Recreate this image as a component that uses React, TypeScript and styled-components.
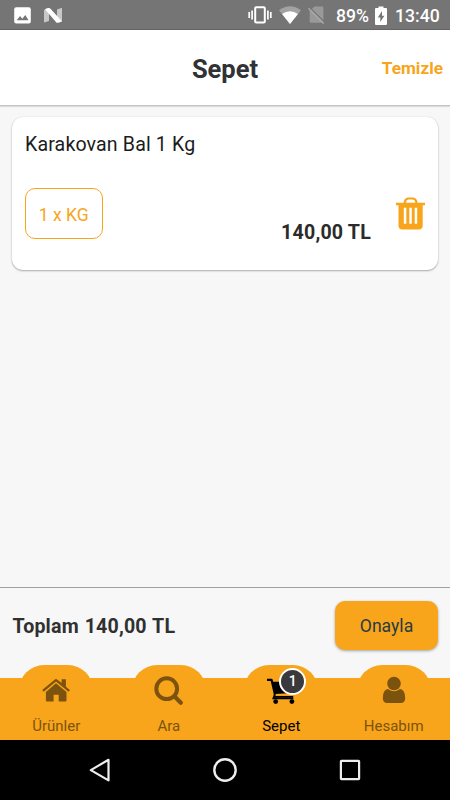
import React from "react";
import styled, { createGlobalStyle } from "styled-components";

const ORANGE = "#f8a51b";

const GlobalStyle = createGlobalStyle`
  * { box-sizing: border-box; }
  body { margin: 0; background: #f7f7f7; font-family: Roboto, "Noto Sans", sans-serif; }
  svg { display: block; flex: none; }
`;

const Screen = styled.div`
  width: 450px;
  height: 800px;
  display: flex;
  flex-direction: column;
  background: #f7f7f7;
  overflow: hidden;
`;

const StatusBar = styled.div`
  height: 30px;
  flex: none;
  display: flex;
  align-items: center;
  justify-content: space-between;
  padding: 1px 11px 0 14px;
  background: #757575;
  border-bottom: 1px solid #686466;
  color: #fff;
`;

const StatusGroup = styled.div<{ $gap: number }>`
  display: flex;
  align-items: center;
  gap: ${(p) => p.$gap}px;
`;

const StatusText = styled.span<{ $width: number; $ml?: number }>`
  width: ${(p) => p.$width}px;
  margin-left: ${(p) => p.$ml ?? 0}px;
  font-size: 17.6px;
  font-weight: 500;
  line-height: 22px;
  white-space: nowrap;
  padding-top: 2px;
`;

const Header = styled.header`
  height: 76px;
  flex: none;
  display: grid;
  grid-template-columns: 1fr auto 1fr;
  align-items: center;
  padding: 1px 7px 0;
  background: #fff;
  border-bottom: 1px solid #c4c4c4;
  box-shadow: 0 1px 1px rgba(0, 0, 0, 0.1);
`;

const Title = styled.h1`
  grid-column: 2;
  margin: 0;
  padding-top: 1px;
  font-size: 25.5px;
  line-height: 30px;
  font-weight: 700;
  color: #303234;
`;

const ClearButton = styled.button`
  justify-self: end;
  border: 0;
  padding: 0;
  background: none;
  font: 700 17.2px/20px Roboto, sans-serif;
  color: ${ORANGE};
`;

const Content = styled.main`
  flex: 1;
  padding: 11px 12px 0;
`;

const Card = styled.section`
  height: 153px;
  display: flex;
  flex-direction: column;
  padding: 14px 13px 0 13px;
  background: #fff;
  border-radius: 11px;
  box-shadow: 0 1px 2px rgba(0, 0, 0, 0.3), 0 0 1px rgba(0, 0, 0, 0.15);
`;

const ProductName = styled.div`
  font-size: 19.6px;
  line-height: 27px;
  letter-spacing: 0.13px;
  color: #1c1c1c;
`;

const CardRow = styled.div`
  display: flex;
  align-items: flex-start;
  margin-top: 30px;
`;

const Quantity = styled.div`
  width: 77.5px;
  height: 51px;
  display: flex;
  align-items: center;
  justify-content: center;
  padding-top: 2px;
  border: 1.4px solid ${ORANGE};
  border-radius: 10px;
  font-size: 17.5px;
  color: ${ORANGE};
`;

const Price = styled.div`
  margin: 32px 25px 0 auto;
  font-size: 19.6px;
  line-height: 25px;
  font-weight: 700;
  letter-spacing: 0.2px;
  color: #2b2b2b;
`;

const TrashButton = styled.button`
  border: 0;
  padding: 0;
  margin-top: 9px;
  background: none;
`;

const Summary = styled.section`
  height: 78px;
  flex: none;
  display: flex;
  justify-content: space-between;
  align-items: center;
  padding: 0 12px 0 12.5px;
  border-top: 1px solid #a0a0a0;
`;

const Total = styled.div`
  font-size: 19.6px;
  line-height: 24px;
  font-weight: 700;
  letter-spacing: 0.18px;
  word-spacing: 0.8px;
  color: #303030;
`;

const ConfirmButton = styled.button`
  width: 103px;
  height: 49px;
  margin-bottom: 3px;
  padding: 2px 0 0;
  border: 0;
  border-radius: 10px;
  background: ${ORANGE};
  box-shadow: 0 1px 3px rgba(0, 0, 0, 0.35);
  font: 400 17.6px/22px Roboto, sans-serif;
  color: #263c44;
`;

const TabBar = styled.nav`
  height: 75px;
  flex: none;
  display: grid;
  grid-template-columns: repeat(4, 1fr);
  background: linear-gradient(transparent 12.5px, ${ORANGE} 12.5px);
`;

const Tab = styled.div<{ $active?: boolean }>`
  display: flex;
  flex-direction: column;
  align-items: center;
  color: ${(p) => (p.$active ? "#000" : "#7c530e")};
`;

const TabBump = styled.div`
  position: relative;
  width: 74px;
  height: 50px;
  display: flex;
  justify-content: center;
  background: ${ORANGE};
  border-radius: 25px 25px 0 0;
`;

const TabLabel = styled.span`
  font-size: 15px;
  line-height: 22px;
`;

const Badge = styled.span`
  position: absolute;
  left: 35px;
  top: 2.5px;
  width: 27px;
  height: 27px;
  display: flex;
  align-items: center;
  justify-content: center;
  border: 2.5px solid #fff;
  border-radius: 50%;
  background: #3a3a3c;
  color: #fff;
  font-size: 14px;
  font-weight: 500;
`;

const SystemNav = styled.div`
  height: 60px;
  flex: none;
  display: grid;
  grid-template-columns: repeat(3, 125px);
  justify-content: center;
  justify-items: center;
  align-items: center;
  background: #000;
`;

const ImageIcon = () => (
  <svg width="17" height="17" viewBox="0 0 17 17">
    <rect x="0.2" y="0.2" width="16.6" height="16.4" rx="2" fill="#fff" />
    <path d="M2.7 13.2 6 9l2.3 2.7L11.3 8l3.2 5.2Z" fill="#757575" />
  </svg>
);

const NougatIcon = () => (
  <svg width="19" height="17" viewBox="0 0 19 17">
    <path d="M0 3 5 1v13L0 15.600ZM13 2.500 18 .8v13.800L13 15.500Z" fill="#c8c8c8" />
    <path d="M1 2.200Q4.500.3 6 1.300L17.900 14.200Q14.500 16.200 12.600 15.800Z" fill="#fff" />
  </svg>
);

const VibrateIcon = () => (
  <svg width="24" height="18" viewBox="0 0 24 18" fill="none" stroke="#fff">
    <rect x="7.2" y="1.2" width="9.6" height="15.4" rx="1" strokeWidth="2" />
    <path d="M1.2 6v6M4.1 4.5v9M19.9 4.5v9M22.8 6v6" strokeWidth="1.7" />
  </svg>
);

const WifiIcon = () => (
  <svg width="22" height="18" viewBox="0 0 22 18">
    <path d="M11 18 0 4.2Q11-3.8 22 4.2Z" fill="#a2a2a2" />
    <path d="M11 18 3 8Q11 2.3 19 8Z" fill="#fff" />
  </svg>
);

const NoSimIcon = () => (
  <svg width="17" height="18" viewBox="0 0 17 18">
    <path d="M6.3.6H14q1.4 0 1.4 1.4v14.8H3q-1.3 0-1.3-1.3V5.3Z" fill="#999" />
    <path d="m1.500 1.500 15 15" stroke="#757575" strokeWidth="1.600" />
    <path d="m.5 2.3 15.2 15.2" stroke="#aaa" strokeWidth="1.500" />
  </svg>
);

const BatteryIcon = () => (
  <svg width="12" height="19" viewBox="0 0 12 19">
    <path d="M3.5 2V.5h5V2H11q1 0 1 1v15q0 1-1 1H1q-1 0-1-1V3q0-1 1-1Z" fill="#fff" />
    <path d="M7 5 2.8 11.5h2.5V16L9.4 9.7H7Z" fill="#757575" />
  </svg>
);

const TrashIcon = () => (
  <svg width="29" height="33" viewBox="0 0 29 33" fill={ORANGE}>
    <path d="M8.8 6.5V5.2q.6-3.700 3.6-3.700h4.3q3.1 0 3.7 3.700v1.3" fill="none" stroke={ORANGE} strokeWidth="2.2" />
    <path
      fillRule="evenodd"
      d="M0 5.8h29v2.4h-2.3v20.3q0 4-4 4H6.5q-4 0-4-4V8.200H0ZM7.800 10.800v16h2.500v-16Zm5.500 0v16h2.500v-16Zm5.400 0v16h2.500v-16Z"
    />
  </svg>
);

const HomeIcon = () => (
  <svg width="28" height="38" viewBox="0 0 28 38" fill="currentColor">
    <path d="M14 18.300 24.500 27v8.500q0 1-1 1h-6.800v-6.700h-5.100v6.700H4.900q-1 0-1-1V27Z" />
    <path d="M.2 25 12.900 14.400q1.100-.9 2.200 0l4.500 3.700V14.300h4.300v7.400L28 25l-1.500 1.800L14 16.500 1.700 26.800Z" />
  </svg>
);

const SearchIcon = () => (
  <svg width="32" height="42" viewBox="0 0 32 42" fill="none" stroke="currentColor">
    <circle cx="13.700" cy="23.700" r="10.400" strokeWidth="4" />
    <path d="m21.300 31.300 6.500 6.400" strokeWidth="4.300" strokeLinecap="round" />
  </svg>
);

const CartIcon = () => (
  <svg width="30" height="40" viewBox="0 0 30 40">
    <path
      d="M1 14.900h4.600l3.800 16.600h17.800"
      fill="none"
      stroke="currentColor"
      strokeWidth="2.200"
      strokeLinejoin="round"
    />
    <path d="M6.300 16.700h21v11.300L8.900 29Z" fill="currentColor" />
    <path d="M9 30.300h18.300" stroke={ORANGE} strokeWidth="1.300" />
    <path d="M8.800 29.800 7.500 33.200h19.800" fill="none" stroke="currentColor" strokeWidth="2" />
    <circle cx="9.700" cy="36.600" r="2.400" fill="currentColor" />
    <circle cx="25.900" cy="36.600" r="2.400" fill="currentColor" />
  </svg>
);

const UserIcon = () => (
  <svg width="24" height="40" viewBox="0 0 24 40" fill="currentColor">
    <circle cx="12" cy="18.500" r="6.800" />
    <path d="M6 24q6 4.500 12 0 5.200.8 5.200 9 0 5.100-4.500 5.100H5.300q-4.500 0-4.500-5.100 0-8.200 5.200-9Z" />
  </svg>
);

const tabs = [
  { label: "Ürünler", icon: <HomeIcon /> },
  { label: "Ara", icon: <SearchIcon /> },
  { label: "Sepet", icon: <CartIcon />, active: true, count: 1 },
  { label: "Hesabım", icon: <UserIcon /> },
];

export default function App() {
  return (
    <Screen>
      <GlobalStyle />
      <StatusBar>
        <StatusGroup $gap={13}>
          <ImageIcon />
          <NougatIcon />
        </StatusGroup>
        <StatusGroup $gap={7}>
          <VibrateIcon />
          <WifiIcon />
          <NoSimIcon />
          <StatusText $width={32} $ml={4}>89%</StatusText>
          <BatteryIcon />
          <StatusText $width={44} $ml={1}>13:40</StatusText>
        </StatusGroup>
      </StatusBar>
      <Header>
        <Title>Sepet</Title>
        <ClearButton>Temizle</ClearButton>
      </Header>
      <Content>
        <Card>
          <ProductName>Karakovan Bal 1 Kg</ProductName>
          <CardRow>
            <Quantity>1 x KG</Quantity>
            <Price>140,00 TL</Price>
            <TrashButton aria-label="Sil">
              <TrashIcon />
            </TrashButton>
          </CardRow>
        </Card>
      </Content>
      <Summary>
        <Total>Toplam 140,00 TL</Total>
        <ConfirmButton>Onayla</ConfirmButton>
      </Summary>
      <TabBar>
        {tabs.map((tab) => (
          <Tab key={tab.label} $active={tab.active}>
            <TabBump>
              {tab.icon}
              {tab.count && <Badge>{tab.count}</Badge>}
            </TabBump>
            <TabLabel>{tab.label}</TabLabel>
          </Tab>
        ))}
      </TabBar>
      <SystemNav>
        <svg width="22" height="26" viewBox="0 0 22 26" fill="none" stroke="#eee" strokeWidth="2.200" strokeLinejoin="round">
          <path d="M19.500 2.800v20.600L1.800 13.100Z" />
        </svg>
        <svg width="26" height="26" viewBox="0 0 26 26" fill="none" stroke="#eee" strokeWidth="2.400">
          <circle cx="13" cy="13" r="10.700" />
        </svg>
        <svg width="22" height="22" viewBox="0 0 22 22" fill="none" stroke="#eee" strokeWidth="2.200">
          <rect x="1.900" y="1.900" width="18.200" height="18.200" rx="0.500" />
        </svg>
      </SystemNav>
    </Screen>
  );
}
